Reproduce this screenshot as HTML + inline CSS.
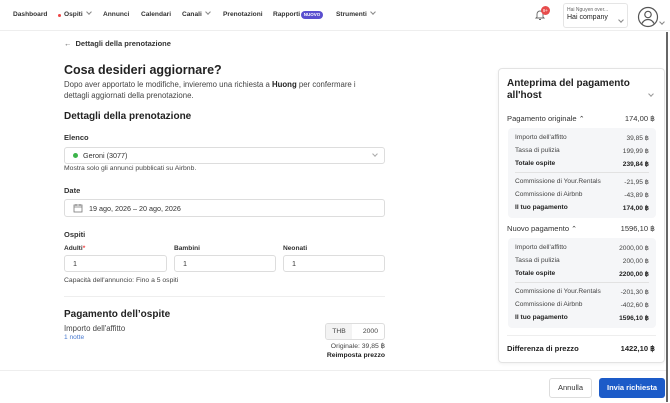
<!DOCTYPE html>
<html><head><meta charset="utf-8"><style>
*{box-sizing:border-box;margin:0;padding:0}
body{width:670px;height:403px;overflow:hidden;background:#fff;font-family:"Liberation Sans",sans-serif;color:#222;position:relative}
.a{position:absolute;white-space:nowrap}
.nav{font-size:6.6px;font-weight:bold;color:#333;top:11px}
.chev{display:inline-block;width:4px;height:4px;border-right:1px solid #888;border-bottom:1px solid #888;transform:rotate(45deg);margin-left:4px;position:relative;top:-2px}
.inp{position:absolute;border:1px solid #ddd;border-radius:3px;background:#fff;font-size:7.2px;color:#333;padding-left:8px;display:flex;align-items:center}
.lbl{font-size:7.5px;font-weight:bold;color:#333}
.sm{font-size:6.8px;color:#444}
.box{position:absolute;left:508px;width:148px;background:#f5f6f8;border-radius:4px}
.row{position:absolute;left:7px;right:7px;font-size:6.6px;color:#444;display:flex;justify-content:space-between}
.row.b{font-weight:bold;color:#222}
</style></head><body>
<div class="a" style="left:0;top:30px;width:670px;height:1px;background:#eee"></div>
<div class="a nav" style="left:13px">Dashboard</div>
<div class="a" style="left:58px;top:14px;width:3px;height:3px;border-radius:50%;background:#e44"></div>
<div class="a nav" style="left:64px">Ospiti<span class="chev"></span></div>
<div class="a nav" style="left:103px">Annunci</div>
<div class="a nav" style="left:141px">Calendari</div>
<div class="a nav" style="left:182px">Canali<span class="chev"></span></div>
<div class="a nav" style="left:223px">Prenotazioni</div>
<div class="a nav" style="left:273px">Rapporti</div>
<div class="a" style="left:301px;top:11px;width:22px;height:8px;border-radius:4px;background:#5a4fcf;color:#fff;font-size:4.5px;font-weight:bold;text-align:center;line-height:8px">NUOVO</div>
<div class="a nav" style="left:336px">Strumenti<span class="chev"></span></div>
<svg class="a" style="left:534px;top:9px" width="12" height="12" viewBox="0 0 12 12"><path d="M3 8V5a3 3 0 016 0v3l1 1H2z M5 10.5h2" fill="none" stroke="#666" stroke-width="0.9"/></svg>
<div class="a" style="left:541px;top:6px;width:9px;height:9px;border-radius:50%;background:#e74c4c;color:#fff;font-size:4.5px;text-align:center;line-height:9px">9+</div>
<div class="a" style="left:563px;top:3px;width:65px;height:25px;border:1px solid #e5e5e5;border-radius:3px"></div>
<div class="a" style="left:567px;top:7px;font-size:5px;color:#666">Hai Nguyen over...</div>
<div class="a" style="left:567px;top:14px;font-size:7px;color:#222">Hai company</div>
<div class="a" style="left:615px;top:11px"><span class="chev"></span></div>
<svg class="a" style="left:637px;top:6px" width="22" height="22" viewBox="0 0 22 22"><circle cx="11" cy="11" r="9.5" fill="none" stroke="#555" stroke-width="1.2"/><circle cx="11" cy="8.5" r="3.2" fill="none" stroke="#555" stroke-width="1.2"/><path d="M5 17.5c1.5-3 3.5-4 6-4s4.5 1 6 4" fill="none" stroke="#555" stroke-width="1.2"/></svg>
<div class="a" style="left:656px;top:13px"><span class="chev"></span></div>
<div class="a" style="left:666px;top:32px;width:2px;height:370px;background:#666"></div>

<div class="a" style="left:64px;top:39px;font-size:7.5px;color:#333;font-weight:bold"><span style="font-weight:normal;color:#555;margin-right:4px">←</span>Dettagli della prenotazione</div>
<div class="a" style="left:64px;top:63px;font-size:12.5px;font-weight:bold;color:#222">Cosa desideri aggiornare?</div>
<div class="a" style="left:64px;top:80px;font-size:7.8px;color:#444;line-height:10.5px">Dopo aver apportato le modifiche, invieremo una richiesta a <b style="color:#222">Huong</b> per confermare i<br>dettagli aggiornati della prenotazione.</div>
<div class="a" style="left:64px;top:111px;font-size:10px;font-weight:bold;color:#222">Dettagli della prenotazione</div>
<div class="a lbl" style="left:64px;top:133px">Elenco</div>
<div class="inp" style="left:64px;top:147px;width:321px;height:17px"><span style="width:5px;height:5px;border-radius:50%;background:#3bb44a;margin-right:5px"></span>Geroni (3077)<span style="margin-left:auto;margin-right:7px"><span class="chev" style="border-color:#aaa"></span></span></div>
<div class="a sm" style="left:64px;top:165px">Mostra solo gli annunci pubblicati su Airbnb.</div>
<div class="a lbl" style="left:64px;top:186px">Date</div>
<div class="inp" style="left:64px;top:199px;width:321px;height:18px"><svg width="10" height="10" viewBox="0 0 10 10" style="margin-right:6px"><rect x="1" y="2" width="8" height="7" fill="none" stroke="#777" stroke-width="0.8"/><path d="M1 4h8M3 1v2M7 1v2" stroke="#777" stroke-width="0.8"/></svg>19 ago, 2026 – 20 ago, 2026</div>
<div class="a lbl" style="left:64px;top:230px">Ospiti</div>
<div class="a" style="left:64px;top:245px;font-size:6.6px;font-weight:bold;color:#333">Adulti<span style="color:#e44">*</span></div>
<div class="a" style="left:174px;top:245px;font-size:6.6px;font-weight:bold;color:#333">Bambini</div>
<div class="a" style="left:283px;top:245px;font-size:6.6px;font-weight:bold;color:#333">Neonati</div>
<div class="inp" style="left:64px;top:255px;width:103px;height:17px">1</div>
<div class="inp" style="left:174px;top:255px;width:102px;height:17px">1</div>
<div class="inp" style="left:283px;top:255px;width:102px;height:17px">1</div>
<div class="a sm" style="left:64px;top:277px">Capacità dell'annuncio: Fino a 5 ospiti</div>
<div class="a" style="left:64px;top:296px;width:321px;height:1px;background:#eee"></div>
<div class="a" style="left:64px;top:309px;font-size:10px;font-weight:bold;color:#222">Pagamento dell’ospite</div>
<div class="a" style="left:64px;top:324px;font-size:7.8px;color:#444">Importo dell'affitto</div>
<div class="a" style="left:64px;top:334px;font-size:6.6px;color:#4a7bd0">1 notte</div>
<div class="a" style="left:325px;top:323px;width:60px;height:17px;border:1px solid #ddd;border-radius:3px;overflow:hidden;font-size:6.8px;color:#444">
<div style="position:absolute;left:0;top:0;width:26px;height:100%;background:#f3f3f3;text-align:center;line-height:15px">THB</div>
<div style="position:absolute;right:6px;top:0;line-height:15px">2000</div></div>
<div class="a sm" style="right:285px;top:342px">Originale: 39,85 ฿</div>
<div class="a" style="right:285px;top:352px;font-size:6.8px;font-weight:bold;color:#222">Reimposta prezzo</div>

<div class="a" style="left:498px;top:68px;width:167px;height:295px;border:1px solid #e3e3e3;border-radius:4px;box-shadow:0 1px 3px rgba(0,0,0,.06)"></div>
<div class="a" style="left:507px;top:78px;font-size:10px;font-weight:bold;color:#222;line-height:12px">Anteprima del pagamento<br>all'host</div>
<div class="a" style="left:645px;top:85px"><span class="chev" style="border-color:#999"></span></div>
<div class="a" style="left:507px;top:114px;font-size:7.6px;color:#333">Pagamento originale <span style="font-size:7px">⌃</span></div>
<div class="a" style="right:15px;top:114px;font-size:7.6px;color:#333">174,00 ฿</div>
<div class="box" style="top:128px;height:90px">
<div class="row" style="top:6px"><span>Importo dell'affitto</span><span>39,85 ฿</span></div>
<div class="row" style="top:19px"><span>Tassa di pulizia</span><span>199,99 ฿</span></div>
<div class="row b" style="top:32px"><span>Totale ospite</span><span>239,84 ฿</span></div>
<div style="position:absolute;left:7px;right:7px;top:44px;height:1px;background:#e2e2e2"></div>
<div class="row" style="top:50px"><span>Commissione di Your.Rentals</span><span>-21,95 ฿</span></div>
<div class="row" style="top:63px"><span>Commissione di Airbnb</span><span>-43,89 ฿</span></div>
<div class="row b" style="top:76px"><span>Il tuo pagamento</span><span>174,00 ฿</span></div>
</div>
<div class="a" style="left:507px;top:224px;font-size:7.6px;color:#333">Nuovo pagamento <span style="font-size:7px">⌃</span></div>
<div class="a" style="right:15px;top:224px;font-size:7.6px;color:#333">1596,10 ฿</div>
<div class="box" style="top:238px;height:90px">
<div class="row" style="top:6px"><span>Importo dell'affitto</span><span>2000,00 ฿</span></div>
<div class="row" style="top:19px"><span>Tassa di pulizia</span><span>200,00 ฿</span></div>
<div class="row b" style="top:32px"><span>Totale ospite</span><span>2200,00 ฿</span></div>
<div style="position:absolute;left:7px;right:7px;top:44px;height:1px;background:#e2e2e2"></div>
<div class="row" style="top:50px"><span>Commissione di Your.Rentals</span><span>-201,30 ฿</span></div>
<div class="row" style="top:63px"><span>Commissione di Airbnb</span><span>-402,60 ฿</span></div>
<div class="row b" style="top:76px"><span>Il tuo pagamento</span><span>1596,10 ฿</span></div>
</div>
<div class="a" style="left:507px;top:335px;width:149px;height:1px;background:#eee"></div>
<div class="a" style="left:507px;top:344px;font-size:7.6px;font-weight:bold;color:#222">Differenza di prezzo</div>
<div class="a" style="right:15px;top:344px;font-size:7.6px;font-weight:bold;color:#222">1422,10 ฿</div>

<div class="a" style="left:0;top:370px;width:666px;height:1px;background:#eee"></div>
<div class="a" style="left:549px;top:378px;width:43px;height:20px;border:1px solid #ddd;border-radius:3px;font-size:7.5px;color:#333;text-align:center;line-height:18px">Annulla</div>
<div class="a" style="left:599px;top:378px;width:66px;height:20px;background:#1c5bc8;border-radius:3px;font-size:7.5px;font-weight:bold;color:#fff;text-align:center;line-height:20px">Invia richiesta</div>
</body></html>
